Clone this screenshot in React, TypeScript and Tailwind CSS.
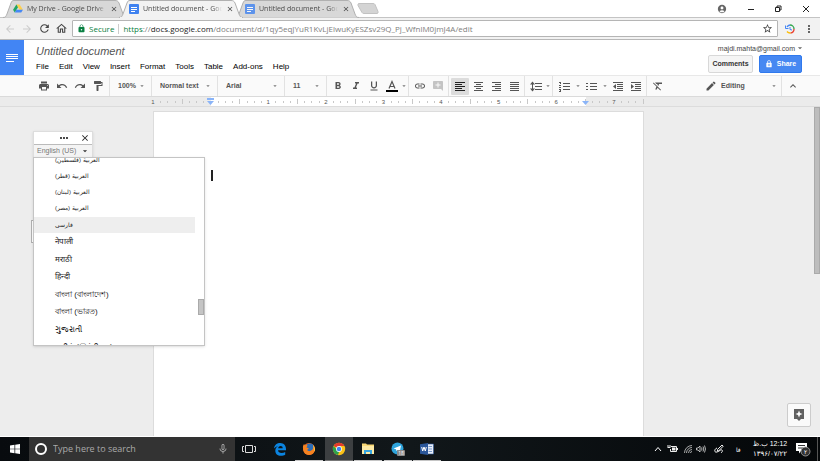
import React from "react";
import {
  MdPrint, MdUndo, MdRedo, MdFormatPaint, MdFormatBold, MdFormatItalic, MdFormatUnderlined,
  MdLink, MdAddComment, MdFormatClear, MdEdit, MdExpandLess,
  MdArrowDropDown, MdRefresh, MdStarBorder, MdLock, MdMoreVert, MdAccountCircle,
  MdMoreHoriz, MdClose, MdArrowBack, MdArrowForward, MdMicNone, MdOutlineHome, MdEnhancedEncryption,
} from "react-icons/md";

const docsFont = "font-['Liberation_Sans',Arial,sans-serif]";
const systemFont = "font-['Open_Sans','Noto_Sans',sans-serif]";

function DriveIcon() {
  return (
    <svg viewBox="0 0 24 22" className="h-[9px] w-[10px] shrink-0" aria-hidden="true">
      <path d="M8 1h8l8 13h-8z" fill="#ffcf4a" />
      <path d="M8 1l4 7L4 21 0 14z" fill="#1fa463" />
      <path d="M8 14h16l-4 7H4z" fill="#4688f4" />
    </svg>
  );
}

function DocIcon({ faded = false }: { faded?: boolean }) {
  return (
    <svg viewBox="0 0 10 10" className={`size-[10px] shrink-0 ${faded ? "opacity-80" : ""}`} aria-hidden="true">
      <rect width="10" height="10" rx="1" fill="#3f82f0" />
      <path d="M2 3.500h6M2 5.500h6M2 7.500h4" stroke="#fff" strokeWidth="1" />
    </svg>
  );
}

type TabProps = { title: string; icon: React.ReactNode; active?: boolean };

function BrowserTab({ title, icon, active }: TabProps) {
  return (
    <div className={`relative flex h-[18px] w-[124px] shrink-0 items-center ${active ? "z-10" : "-mx-2"}`}>
      <svg viewBox="0 0 124 18" className="absolute inset-0 h-full w-full" aria-hidden="true">
        <path d="M0 17.5C3 17.5 3 16 4 14L8 3C9 1 9 .5 11 .5H112C114 .5 115 1 116 3L120 14C121 16 121 17.5 124 17.5" fill={active ? "#f2f2f2" : "#d8d8d8"} stroke="#b0b0b0" />
        {active && <path d="M1 17.5H123" stroke="#f2f2f2" />}
      </svg>
      <div className="relative flex w-full items-center gap-1 pl-[10px] pr-[9px]">
        {icon}
        <span className="w-20 overflow-hidden whitespace-nowrap text-[7px] leading-[10px] text-[#4a4a4a] [mask-image:linear-gradient(to_right,black_88%,transparent)]">{title}</span>
        <button aria-label="Close tab" className="ml-auto"><MdClose className="size-2 text-[#444]" /></button>
      </div>
    </div>
  );
}

function Browser() {
  return (
    <div className={systemFont}>
      <div className="flex h-[18px] items-center border-b border-[#c4c4c4] bg-white pl-[11px]">
        <BrowserTab title="My Drive - Google Drive" icon={<DriveIcon />} />
        <BrowserTab title="Untitled document - Google Docs" icon={<DocIcon />} active />
        <BrowserTab title="Untitled document - Google Docs" icon={<DocIcon faded />} />
        <button aria-label="New tab" className="ml-[6px]">
          <svg viewBox="0 0 22 11" className="h-[11px] w-[22px]"><path d="M2 .5h14q1.500 0 2 1l3 7q.5 2-1 2H7q-1.500 0-2-1l-4-7q-.5-2 1-2z" fill="#d4d4d4" stroke="#c2c2c2" /></svg>
        </button>
        <div className="ml-auto flex items-center pr-[10px] text-[#222]">
          <button aria-label="Profile" className="mr-5"><MdAccountCircle className="size-[10px] text-[#666]" /></button>
          <button aria-label="Minimize" className="mr-[19px]">
            <svg viewBox="0 0 8 8" className="size-2"><path d="M1 4.5h6" stroke="currentColor" /></svg>
          </button>
          <button aria-label="Restore" className="mr-5">
            <svg viewBox="0 0 8 8" className="size-2" fill="none" stroke="currentColor"><path d="M1.500 2.500h4v4h-4zM3 2V1h4v4H6" /></svg>
          </button>
          <button aria-label="Close">
            <svg viewBox="0 0 8 8" className="size-2" stroke="currentColor"><path d="M1 1l6 6M7 1L1 7" /></svg>
          </button>
        </div>
      </div>
      <div className="flex h-[22px] items-center border-b border-[#b8b8b8] bg-[#f2f2f2] pl-1 pr-[5px]">
        <button aria-label="Back" className="w-[17px]"><MdArrowBack className="size-3 text-[#ccc]" /></button>
        <button aria-label="Forward" className="w-[17px]"><MdArrowForward className="size-3 text-[#ccc]" /></button>
        <button aria-label="Reload" className="w-[17px]"><MdRefresh className="size-[13px] text-[#444]" /></button>
        <button aria-label="Home" className="w-[17px]"><MdOutlineHome className="size-[13px] text-[#444]" /></button>
        <div className="flex h-[17px] min-w-0 flex-1 items-center rounded-[1px] border border-[#b5b5b5] bg-white px-1 text-[8px] leading-3">
          <MdLock className="mr-[3px] size-[9px] shrink-0 text-[#0b8043]" />
          <span className="text-[#0b8043]">Secure</span>
          <span className="mx-1 h-[10px] w-px shrink-0 bg-[#ccc]" />
          <span className="flex-1 truncate text-[#808080]">
            <span className="text-[#0b8043]">https</span>://<span className="text-[#222]">docs.google.com</span>/document/d/1qy5eqJYuR1KvLjElwuKyESZsv29Q_Pj_WfnlM0jmJ4A/edit
          </span>
          <button aria-label="Bookmark"><MdStarBorder className="size-[11px] text-[#444]" /></button>
        </div>
        <button aria-label="Extension" className="ml-[7px]">
          <svg viewBox="0 0 10 10" className="size-[10px]" fill="none" strokeWidth="1.4">
            <path d="M2 3A4 4 0 0 1 5 1" stroke="#4285f4" />
            <path d="M5 1A4 4 0 0 1 9 5" stroke="#34a853" />
            <path d="M9 5A4 4 0 0 1 5.500 9" stroke="#ea4335" />
            <path d="M5.500 9A4 4 0 0 1 2 7.500" stroke="#fbbc05" />
            <path d="M.5 1.500v3h3M5 3v2.500l2 .5" stroke="#4285f4" strokeWidth="1" />
          </svg>
        </button>
        <button aria-label="Menu" className="ml-2"><MdMoreVert className="size-3 text-[#444]" /></button>
      </div>
    </div>
  );
}

const menus = ["File", "Edit", "View", "Insert", "Format", "Tools", "Table", "Add-ons", "Help"];

function DocsHeader() {
  return (
    <header className="flex h-[35px] bg-white">
      <a href="#home" aria-label="Docs home" className="flex w-6 items-center justify-center bg-[#4285f4]">
        <svg viewBox="0 0 12 8" className="h-2 w-3" shapeRendering="crispEdges"><path d="M0 .5h12M0 2.500h12M0 4.500h12M0 7.500h8" stroke="#fff" /></svg>
      </a>
      <div className="flex-1 pl-3 pt-1">
        <input aria-label="Document title" defaultValue="Untitled document" className="block h-[14px] w-40 text-[11px] italic leading-[14px] text-[#555] outline-none" />
        <nav className="mt-1 flex gap-[10px] text-[8px] leading-[10px] text-black">
          {menus.map((m) => <button key={m}>{m}</button>)}
        </nav>
      </div>
      <div className="flex flex-col items-end pr-[18px] pt-[3px]">
        <button className="-mr-[3px] flex items-center text-[7px] leading-[9px] text-[#444]">
          majdi.mahta@gmail.com<MdArrowDropDown className="size-[10px] text-[#666]" />
        </button>
        <div className="mt-[2px] flex gap-[6px] text-[7px] font-bold">
          <button className="h-[18px] w-[45px] rounded-[2px] border border-[#d8d8d8] bg-[#f5f5f5] text-[#333]">Comments</button>
          <button className="flex h-[18px] w-[43px] items-center justify-center gap-1 rounded-[2px] border border-[#3079ed] bg-[#4688f2] text-white">
            <MdEnhancedEncryption className="size-2" />Share
          </button>
        </div>
      </div>
    </header>
  );
}

function LineIcon({ d, fill }: { d: string; fill?: string }) {
  return (
    <svg viewBox="0 0 12 12" fill="none" shapeRendering="crispEdges" aria-hidden="true">
      <path d={d} stroke="currentColor" />
      {fill && <path d={fill} fill="currentColor" shapeRendering="auto" />}
    </svg>
  );
}

function Tool({ label, icon, selected, faded }: { label: string; icon: React.ReactNode; selected?: boolean; faded?: boolean }) {
  return (
    <button aria-label={label} className={`flex h-[17px] w-[18px] shrink-0 items-center justify-center rounded-[1px] [&>svg]:size-3 ${selected ? "bg-[#dcdcdc] text-[#222]" : faded ? "text-[#c4c4c4]" : "text-[#555]"}`}>
      {icon}
    </button>
  );
}

function More({ label, narrow }: { label: string; narrow?: boolean }) {
  return (
    <button aria-label={label} className={`flex shrink-0 justify-center ${narrow ? "w-[6px]" : "w-[9px]"}`}>
      <MdArrowDropDown className="size-2 shrink-0 text-[#777]" />
    </button>
  );
}

function Group({ children }: { children: React.ReactNode }) {
  return <div className="flex h-full shrink-0 items-center border-l border-[#e2e2e2] pl-[2px] pr-px">{children}</div>;
}

function Picker({ label, value, width }: { label: string; value: string; width: string }) {
  return (
    <div className={`relative flex h-full shrink-0 items-center border-l border-[#e2e2e2] ${width}`}>
      <select aria-label={label} defaultValue={value} className="h-full w-full appearance-none pl-2 text-[7px] font-bold leading-[10px] text-[#555] outline-none">
        <option>{value}</option>
      </select>
      <MdArrowDropDown className="pointer-events-none absolute right-[5px] size-2 text-[#777]" />
    </div>
  );
}

function Toolbar() {
  return (
    <div className="flex h-[22px] items-center border-y border-t-[#e8e8e8] border-b-[#dadada] bg-[#fafafa] pl-[35px]">
      <div className="flex shrink-0 pr-[2px]">
        <Tool label="Print" icon={<MdPrint />} />
        <Tool label="Undo" icon={<MdUndo />} />
        <Tool label="Redo" icon={<MdRedo />} />
        <Tool label="Paint format" icon={<MdFormatPaint />} />
      </div>
      <Picker label="Zoom" value="100%" width="w-[42px]" />
      <Picker label="Style" value="Normal text" width="w-[66px]" />
      <Picker label="Font" value="Arial" width="w-[67px]" />
      <Picker label="Font size" value="11" width="w-[42px]" />
      <Group>
        <Tool label="Bold" icon={<MdFormatBold />} />
        <Tool label="Italic" icon={<MdFormatItalic />} />
        <Tool label="Underline" icon={<MdFormatUnderlined />} />
        <Tool label="Text color" icon={
          <svg viewBox="0 0 12 12" fill="none"><path d="M3 8.500L6 1.500L9 8.500M4 6.500h4" stroke="currentColor" strokeWidth="1.200" /><path d="M0 11h12" stroke="#000" strokeWidth="2" /></svg>
        } />
        <More label="Text color options" narrow />
      </Group>
      <Group>
        <Tool label="Link" icon={<MdLink />} />
        <Tool label="Add comment" icon={<MdAddComment />} faded />
      </Group>
      <Group>
        <Tool label="Align left" icon={<LineIcon d="M1 2.500h10M1 4.500h7M1 6.500h10M1 8.500h7M1 10.500h10" />} selected />
        <Tool label="Align center" icon={<LineIcon d="M2 2.500h9M4 4.500h5M2 6.500h9M4 8.500h5M2 10.500h9" />} />
        <Tool label="Align right" icon={<LineIcon d="M2 2.500h9M5 4.500h6M2 6.500h9M5 8.500h6M2 10.500h9" />} />
        <Tool label="Justify" icon={<LineIcon d="M2 2.500h9M2 4.500h9M2 6.500h9M2 8.500h9M2 10.500h9" />} />
      </Group>
      <Group>
        <Tool label="Line spacing" icon={<LineIcon d="M5 3.500h7M5 6.500h7M5 9.500h7M2.500 3v7" fill="M0 4.500L2.500 1.500 5 4.500zM0 8.500h5L2.500 11.500z" />} />
        <More label="Line spacing options" narrow />
      </Group>
      <Group>
        <Tool label="Numbered list" icon={<LineIcon d="M5 3.500h7M5 6.500h7M5 9.500h7M1 2.500h2M2.500 2v2M1 5.500h2M1 7.500h2M1 9.500h2M1 11.500h2M2.500 9v2" />} />
        <More label="Numbered list options" />
        <Tool label="Bulleted list" icon={<LineIcon d="M5 3.500h7M5 6.500h7M5 9.500h7M1 3.500h2M1 6.500h2M1 9.500h2" />} />
        <More label="Bulleted list options" />
        <Tool label="Decrease indent" icon={<LineIcon d="M1 2.500h10M5 4.500h6M5 6.500h6M5 8.500h6M1 10.500h10" fill="M1 6.500L4 4v5z" />} />
        <Tool label="Increase indent" icon={<LineIcon d="M1 2.500h10M5 4.500h6M5 6.500h6M5 8.500h6M1 10.500h10" fill="M4 6.500L1 4v5z" />} />
      </Group>
      <Group><Tool label="Clear formatting" icon={<MdFormatClear />} /></Group>
      <div className="relative ml-auto flex h-full w-[76px] items-center">
        <MdEdit className="pointer-events-none absolute left-0 size-3 text-[#555]" />
        <select aria-label="Mode" className="h-full w-full appearance-none pl-4 text-[7px] font-bold text-[#555] outline-none">
          <option>Editing</option>
        </select>
        <MdArrowDropDown className="pointer-events-none absolute right-[3px] size-2 text-[#777]" />
      </div>
      <div className="flex h-full w-[39px] items-center border-l border-[#e2e2e2] pl-[2px]">
        <Tool label="Hide menus" icon={<MdExpandLess />} />
      </div>
    </div>
  );
}

function Ruler() {
  const inch = 57.6;
  const ticks = Array.from({ length: 69 }, (_, i) => i).filter((i) => i % 8 !== 0);
  return (
    <div className="flex h-[10px] justify-center border-b border-[#dcdcdc] bg-[#ebebeb] pr-[22px]">
      <svg viewBox="0 0 494 9" className="h-[9px] w-[494px] shrink-0 overflow-visible" aria-label="Ruler">
        <rect x="59" width="375" height="9" fill="#fff" />
        {ticks.map((i) => {
          const major = i % 4 === 0;
          return <rect key={i} x={Math.round(1 + (i * inch) / 8)} y={major ? 2 : 4} width="1" height={major ? 5 : 2} fill="#c8c8c8" />;
        })}
        {[1, 0, 1, 2, 3, 4, 5, 6, 7].map((n, i) => n > 0 && (
          <text key={i} x={1 + i * inch} y="7" textAnchor="middle" fontSize="6" fill="#555">{n}</text>
        ))}
        <path d="M55 1h7v2h-7zM55 4h7l-3.500 4zM430 4h7l-3.500 4z" fill="#8ab4f8" />
      </svg>
    </div>
  );
}

const languages = [
  { name: "العربية (فلسطين)", rtl: true, row: "h-4" },
  { name: "العربية (قطر)", rtl: true, row: "h-4" },
  { name: "العربية (لبنان)", rtl: true, row: "h-4" },
  { name: "العربية (مصر)", rtl: true, row: "h-[17px]" },
  { name: "فارسی", rtl: true, row: "h-4", hover: true },
  { name: "नेपाली", row: "h-[18px]" },
  { name: "मराठी", row: "h-[17px]" },
  { name: "हिन्दी", row: "h-[18px]" },
  { name: "বাংলা (বাংলাদেশ)", row: "h-[17px]" },
  { name: "বাংলা (ভারত)", row: "h-[18px]" },
  { name: "ગુજરાતી", row: "h-[17px]" },
  { name: "தமிழ் (இந்தியா)", row: "h-[18px]" },
];

function VoiceTyping() {
  return (
    <div className="absolute left-[33px] top-6 w-[172px]">
      <div className="absolute -left-0.5 top-[89px] h-[23px] w-1 border border-[#b0b0b0] bg-white" />
      <div className="relative w-[60px] border border-b-0 border-[#ddd] bg-white shadow-sm">
        <div className="flex h-3 items-center pl-6 pr-[2px]">
          <MdMoreHoriz className="size-3 text-[#222]" />
          <button aria-label="Close" className="ml-auto"><MdClose className="size-[10px] text-[#222]" /></button>
        </div>
        <div className="relative flex h-[13px] items-center border-t border-[#bbb] bg-[#f4f4f4]">
          <select aria-label="Language" className="h-full w-full appearance-none pl-[3px] text-[7px] text-[#777] outline-none">
            <option>English (US)</option>
          </select>
          <MdArrowDropDown className="pointer-events-none absolute right-[2px] size-[10px] text-[#333]" />
        </div>
      </div>
      <div className="relative h-[189px] overflow-hidden border border-[#c4c4c4] bg-white shadow">
        <ul role="listbox" aria-label="Languages" className="-mt-1.5 mr-[9px] text-[8px] text-[#222]">
          {languages.map((l) => (
            <li key={l.name} role="option" aria-selected={!!l.hover} dir={l.rtl ? "rtl" : "ltr"} className={`flex items-center whitespace-nowrap pl-[21px] ${l.rtl ? "justify-end text-[6px]" : ""} ${l.row} ${l.hover ? "bg-[#eee]" : ""}`}>
              {l.name}
            </li>
          ))}
        </ul>
        <div className="absolute right-0 top-[141px] h-4 w-[6px] border border-[#aaa] bg-[#c4c4c4]" />
      </div>
    </div>
  );
}

function Canvas() {
  return (
    <main className="relative flex min-h-0 flex-1 justify-center border-b border-white bg-[#ededed] pr-[23px] pt-1">
      <div className="w-[491px] border border-b-0 border-[#dcdcdc] bg-white pl-[57px] pt-[58px]">
        <div className="h-[11px] w-[2px] bg-[#222]" />
      </div>
      <VoiceTyping />
      <div className="absolute right-0 top-0 h-[167px] w-[6px] border border-[#aaa] bg-[#bdbdbd]" />
      <button aria-label="Explore" className="absolute bottom-[9px] right-[9px] flex size-6 items-center justify-center rounded-[2px] border border-[#ccc] bg-[#fafafa]">
        <svg viewBox="0 0 12 14" className="h-[14px] w-3">
          <path d="M1 1h10v10H8l-2 2-2-2H1z" fill="#606060" />
          <path d="M6 2.500L7 5l2.500 1L7 7 6 9.500 5 7 2.500 6 5 5z" fill="#fff" />
        </svg>
      </button>
    </main>
  );
}

function AppButton({ label, open, active, children }: { label: string; open?: boolean; active?: boolean; children: React.ReactNode }) {
  return (
    <button aria-label={label} className={`mr-px flex h-6 w-7 shrink-0 items-center justify-center border-b ${active ? "border-[#777] bg-[#3c3f41]" : open ? "border-[#c5c5c5]" : "border-transparent"} [&>svg]:size-[14px]`}>
      {children}
    </button>
  );
}

function Taskbar() {
  return (
    <footer className={`flex h-6 items-center bg-linear-to-r from-[#080b0e] via-[#11171a] to-[#050709] text-white ${systemFont}`}>
      <button aria-label="Start" className="flex w-[29px] shrink-0 justify-center">
        <svg viewBox="0 0 10 10" className="size-[10px]" fill="#fff"><path d="M0 1.500L4.500.8V4.700H0zM5.200.7L10 0v4.700H5.200zM0 5.300h4.500v3.900L0 8.500zM5.200 5.300H10V10L5.200 9.300z" /></svg>
      </button>
      <label className="flex h-full w-[206px] shrink-0 items-center bg-[#333] pl-[6px] pr-[6px]">
        <span className="size-3 shrink-0 rounded-full border-2 border-white" />
        <input aria-label="Search" placeholder="Type here to search" className="ml-[6px] min-w-0 flex-1 text-[9px] outline-none placeholder:text-[#aaa]" />
        <MdMicNone className="size-3 text-[#aaa]" />
      </label>
      <AppButton label="Task view">
        <svg viewBox="0 0 14 14" fill="none" stroke="#ddd"><path d="M3.500 3.500h7v7h-7zM2 4.500H.5v5H2M12 4.500h1.500v5H12" /></svg>
      </AppButton>
      <div className="w-0.5" />
      <AppButton label="Edge">
        <svg viewBox="0 0 14 14"><path d="M1 6.500C1.500 2.800 4 1 7.200 1 11 1 13 3.800 13 7v1.300H5c.2 2 1.600 2.700 3.500 2.700 1.500 0 2.700-.4 3.700-1v2.700c-1.200.6-2.500 1-4.200 1-3.500 0-5.700-2-5.700-5 0-2 1-3.600 2.700-4.500C3.500 4.600 2 5.200 1 6.500zM5.200 6.200h4.500C9.700 4.800 9 4 7.500 4 6.200 4 5.400 5 5.200 6.200z" fill="#0b84e0" /></svg>
      </AppButton>
      <AppButton label="Firefox" open>
        <svg viewBox="0 0 14 14">
          <circle cx="7" cy="7" r="6" fill="#ee6a1f" /><circle cx="7.800" cy="5.500" r="4" fill="#2c6db5" />
          <path d="M1 4L2 2l1 1.500c1-.6 2-.5 2.500 0L4.500 5.500c1 .5 2 .5 2.200 1.200L5 8c1 1.500 3.500 1.500 5 0 1.500-1.300 1.500-3 1-5 1.500 1.500 2 3.500 1.800 5.500C12 11.500 9.500 13 7 13 3 13 .5 9 1 4z" fill="#f58220" />
          <path d="M11 3c1.500 1.500 2.500 4 1.500 6.500-.8-1-.4-4-1.500-6.500z" fill="#ffd24a" />
        </svg>
      </AppButton>
      <div className="w-px" />
      <AppButton label="Chrome" open active>
        <svg viewBox="0 0 14 14">
          <circle cx="7" cy="7" r="6.200" fill="#fbc116" />
          <path d="M7 7L1.600 4A6.200 6.200 0 0 1 12.400 4H7z" fill="#e33b2e" />
          <path d="M1.600 4L7 10l-1 3.100A6.200 6.200 0 0 1 1.600 4z" fill="#2ba24c" />
          <circle cx="7" cy="7" r="2.900" fill="#fff" /><circle cx="7" cy="7" r="2.200" fill="#3f83ef" />
        </svg>
      </AppButton>
      <AppButton label="File Explorer" open>
        <svg viewBox="0 0 14 14"><path d="M1 1.500h4l1 1h7V12H1z" fill="#f8d775" /><path d="M1 4h12v8H1z" fill="#fce9a5" /><path d="M3 12V8h8v4H9v-2H5v2z" fill="#37a5e0" /></svg>
      </AppButton>
      <div className="w-px" />
      <AppButton label="Telegram" open>
        <svg viewBox="0 0 14 14"><circle cx="6.500" cy="6.500" r="6" fill="#2ea4dc" /><path d="M2.500 6.500L10 3.500 8.800 9.500 6.500 8 5.300 9 5 7.200z" fill="#fff" /><rect x="6" y="8" width="8" height="6" rx="1" fill="#8a8a8a" /><text x="10" y="13" textAnchor="middle" fontSize="5" fill="#fff">18</text></svg>
      </AppButton>
      <AppButton label="Word" open>
        <svg viewBox="0 0 14 14"><path d="M7 2h6.500v10H7z" fill="#e8eef8" stroke="#2b579a" strokeWidth=".6" /><path d="M8.500 4.500h3.500M8.500 7h3.500M8.500 9.500h3.500" stroke="#7899ca" /><path d="M0 2.200L8 1v12L0 11.800z" fill="#2b579a" /><path d="M1.700 5l1 4 1.300-4 1.300 4 1-4" fill="none" stroke="#fff" /></svg>
      </AppButton>
      <div className="ml-auto flex h-full items-center">
        <svg viewBox="0 0 8 8" className="size-2" fill="none" stroke="#fff"><path d="M1 6l3-3.500L7 6" /></svg>
        <svg viewBox="0 0 11 8" className="ml-[5px] h-2 w-[11px]" fill="none" stroke="#eee"><path d="M4 1.500h5.500v5h-6V4M1 0v2M3 0v2M.5 2.500h3" /><path d="M5 4h3.500" strokeWidth="3" /><path d="M10.500 3v2" /></svg>
        <svg viewBox="0 0 8 8" className="ml-[6px] size-2" fill="none" stroke="#ccc" strokeWidth=".8"><path d="M.5 8A7.500 7.500 0 0 1 8 .5M2.500 8A5.500 5.500 0 0 1 8 2.500M4.500 8A3.500 3.500 0 0 1 8 4.500M6.500 8A1.500 1.500 0 0 1 8 6.500" /></svg>
        <svg viewBox="0 0 10 8" className="ml-1 h-2 w-[10px]" fill="none" stroke="#ddd" strokeWidth=".8"><path d="M.5 3h1.500l2-2v6l-2-2H.5zM5.500 2.500q1 1.500 0 3M7 1.500q1.600 2.500 0 5M8.500.5q2 3.500 0 7" /></svg>
        <svg viewBox="0 0 10 10" className="ml-2 size-[10px]" fill="none" stroke="#eee"><path d="M3.500 5.500L8 1l1.200 1.200L4.500 7H3.500zM3 4C0 5 0 9 3 8s4-3 5-2 0 2-1 3" /></svg>
        <span className="ml-3 w-2 font-['DejaVu_Sans',sans-serif] text-[6px]">فا</span>
        <div dir="rtl" className="ml-2 w-9 whitespace-nowrap text-center font-['Liberation_Sans','DejaVu_Sans',sans-serif] text-[7px] leading-[10px]">
          <div><bdi dir="ltr">12:12</bdi> ب.ظ</div>
          <div dir="ltr">۱۳۹۶/۰۷/۲۲</div>
        </div>
        <svg viewBox="0 0 16 16" className="ml-[7px] size-4"><path d="M1 2h11v8H6l-2 2.500V10H1z" fill="#fff" /><path d="M3 4.500h7M3 7h5" stroke="#333" /><circle cx="10.500" cy="10.500" r="4.500" fill="#333" stroke="#aaa" strokeWidth=".8" /><text x="10.500" y="13" textAnchor="middle" fontSize="6" fill="#fff">۲</text></svg>
        <span className="ml-[6px] mr-[2px] h-full w-px bg-[#555]" />
      </div>
    </footer>
  );
}

export default function App() {
  return (
    <div className={`flex h-screen flex-col overflow-hidden bg-white ${docsFont}`}>
      <Browser />
      <DocsHeader />
      <Toolbar />
      <Ruler />
      <Canvas />
      <Taskbar />
    </div>
  );
}
